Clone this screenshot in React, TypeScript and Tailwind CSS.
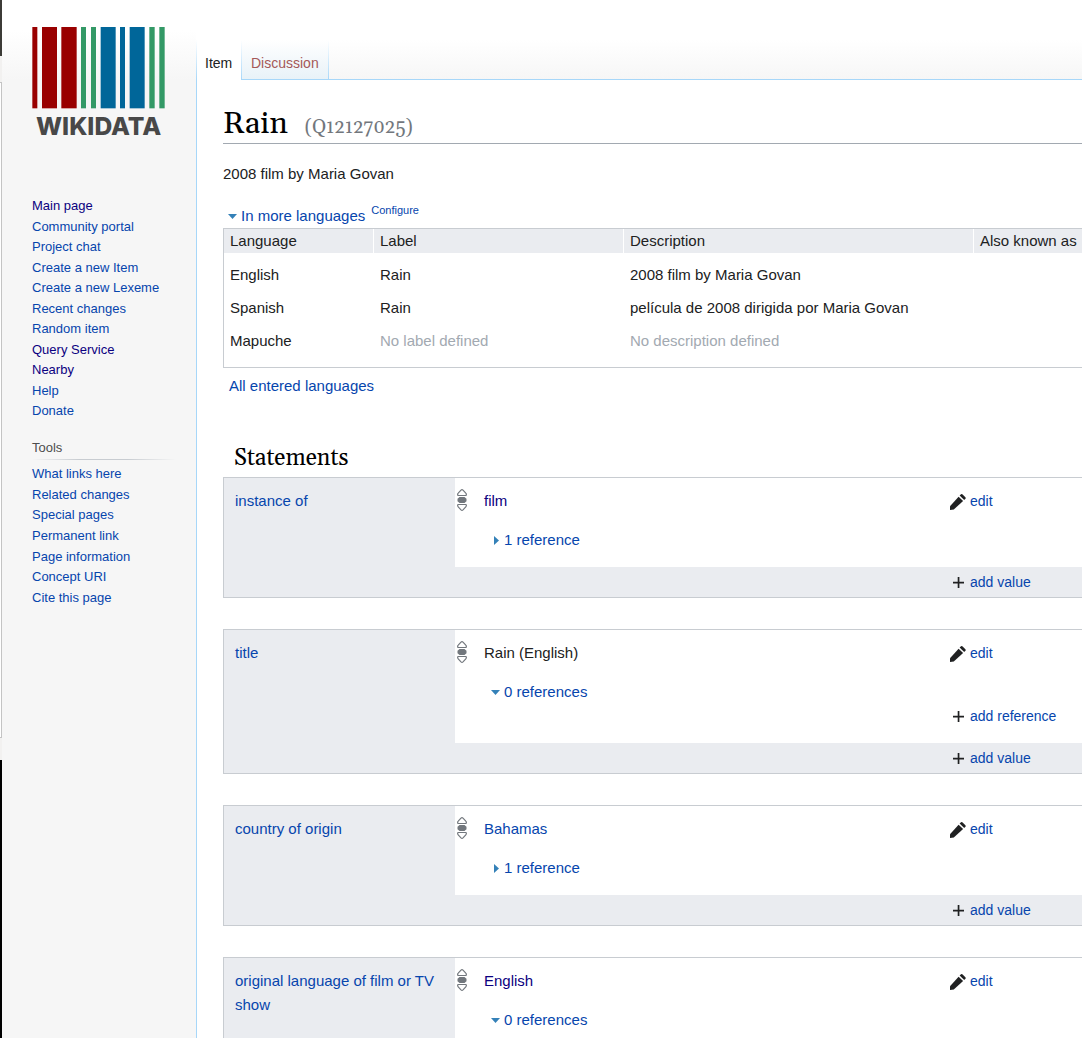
import React from "react";

const LINK = "text-[#0645ad] hover:underline";
const VISITED = "text-[#0b0080] hover:underline";

const BARS: [number, number, string][] = [
  [97, 15, "#990000"],
  [126, 45, "#990000"],
  [184, 46, "#990000"],
  [243, 15, "#339966"],
  [273, 15, "#339966"],
  [302, 45, "#006699"],
  [360, 15, "#006699"],
  [389, 45, "#006699"],
  [448, 16, "#339966"],
  [478, 16, "#339966"],
];

function Logo() {
  return (
    <a href="#main" aria-label="Wikidata" className="mt-[26px] ml-7 block w-[140px]">
      <svg viewBox="90 78 420 360" className="block h-[120px] w-[140px]">
        {BARS.map(([x, w, c]) => (
          <rect key={x} x={x} y={81} width={w} height={244} fill={c} />
        ))}
        <text
          x="296"
          y="404"
          textAnchor="middle"
          fontSize="74"
          fontWeight="800"
          fontFamily="Inter, sans-serif"
          fill="#484848"
        >
          WIKIDATA
        </text>
      </svg>
    </a>
  );
}

const MAIN_LINKS: [string, boolean][] = [
  ["Main page", true],
  ["Community portal", false],
  ["Project chat", false],
  ["Create a new Item", false],
  ["Create a new Lexeme", false],
  ["Recent changes", false],
  ["Random item", false],
  ["Query Service", true],
  ["Nearby", true],
  ["Help", false],
  ["Donate", false],
];

const TOOL_LINKS = [
  "What links here",
  "Related changes",
  "Special pages",
  "Permanent link",
  "Page information",
  "Concept URI",
  "Cite this page",
];

function Sidebar() {
  return (
    <div className="w-[194px] shrink-0 bg-[#f6f6f6] bg-[linear-gradient(to_bottom,#ffffff_30px,#f6f6f6_80px)] bg-[length:100%_80px] bg-no-repeat text-[13px] leading-5">
      <Logo />
      <nav aria-label="Navigation" className="mt-[50px] pl-[30px]">
        <ul className="flex h-[225px] flex-col justify-between">
          {MAIN_LINKS.map(([t, v]) => (
            <li key={t}>
              <a href="#nav" className={v ? VISITED : LINK}>{t}</a>
            </li>
          ))}
        </ul>
      </nav>
      <nav aria-labelledby="tools" className="mt-[17px] pl-[30px]">
        <h3 id="tools" className="text-[#4d4d4d]">Tools</h3>
        <div className="mt-px mr-5 h-px bg-[linear-gradient(to_right,rgba(200,204,209,0)_0%,#c8ccd1_33%,#c8ccd1_66%,rgba(200,204,209,0)_100%)]" />
        <ul className="mt-1 flex h-[144px] flex-col justify-between">
          {TOOL_LINKS.map((t) => (
            <li key={t}>
              <a href="#tool" className={LINK}>{t}</a>
            </li>
          ))}
        </ul>
      </nav>
    </div>
  );
}

function Down() {
  return (
    <svg viewBox="0 0 9 5" className="h-[5px] w-[9px] shrink-0" fill="#3481b8">
      <path d="M0 0h9L4.5 5z" />
    </svg>
  );
}

function Right() {
  return (
    <svg viewBox="0 0 5 9" className="h-[9px] w-[5px] shrink-0" fill="#3481b8">
      <path d="M0 0v9l5-4.5z" />
    </svg>
  );
}

function RankIcon() {
  return (
    <svg viewBox="0 0 10 22" className="mt-[11px] ml-[2px] h-[22px] w-[10px] shrink-0" aria-hidden="true">
      <path d="M1 6.5Q.2 5.2 1.2 4.2L4 1.2Q5 .2 6 1.2l2.8 3Q9.800 5.200 9 6.500z" fill="#fff" stroke="#72777d" strokeWidth="1.2" />
      <path d="M2.500 8h5L9.500 9.800v2.400L7.500 14h-5L.5 12.200V9.800z" fill="#72777d" />
      <path d="M1 15.500Q.2 16.800 1.200 17.800L4 20.800q1 1 2 0l2.800-3Q9.800 16.800 9 15.500z" fill="#fff" stroke="#72777d" strokeWidth="1.2" />
    </svg>
  );
}

function Pencil() {
  return (
    <svg viewBox="0 0 16 16" className="h-4 w-4" fill="#202122">
      <path d="M9.600 1.600 11 .3q.8-.6 1.600.1L15.400 3.200q.7.800 0 1.600L14.200 6z" />
      <path d="M0 12.200 8.600 2.700 13.100 7.100 3.800 15.600 0 16z" />
    </svg>
  );
}

function Plus() {
  return (
    <svg viewBox="0 0 11 11" className="mx-[3px] h-[11px] w-[11px]" fill="#202122">
      <path d="M4.700 0h1.700v4.700H11v1.700H6.400V11H4.700V6.400H0V4.700h4.700z" />
    </svg>
  );
}

function Action({ icon, label }: { icon: "edit" | "add"; label: string }) {
  return (
    <a href="#action" className={"flex w-[133px] shrink-0 items-center text-[14px] leading-6 " + LINK}>
      <span className="flex w-[21px] shrink-0 pt-px pl-px">{icon === "edit" ? <Pencil /> : <Plus />}</span>
      {label}
    </a>
  );
}

type S = { prop: string; value: string; kind: "visited" | "link" | "plain"; refs: number };

const STATEMENTS: S[] = [
  { prop: "instance of", value: "film", kind: "visited", refs: 1 },
  { prop: "title", value: "Rain (English)", kind: "plain", refs: 0 },
  { prop: "country of origin", value: "Bahamas", kind: "link", refs: 1 },
  { prop: "original language of film or TV show", value: "English", kind: "visited", refs: 0 },
];

function Statement({ prop, value, kind, refs }: S) {
  return (
    <section className="mb-[31px] flex border border-r-0 border-[#c8ccd1] bg-[#eaecf0]">
      <div className="w-[231px] shrink-0 px-[11px] py-[11px]">
        <a href="#prop" className={LINK}>{prop}</a>
      </div>
      <div className="min-w-0 flex-1">
        <div className="bg-white pb-[15px]">
          <div className="flex">
            <RankIcon />
            <div className="ml-[17px] min-w-0 flex-1 pt-[11px]">
              {kind === "plain" ? (
                <span>{value}</span>
              ) : (
                <a href="#value" className={kind === "visited" ? VISITED : LINK}>{value}</a>
              )}
            </div>
            <div className="pt-[11px]">
              <Action icon="edit" label="edit" />
            </div>
          </div>
          <button className={"mt-[15px] ml-9 flex items-center " + LINK}>
            <span className={refs ? "flex w-[13px] pl-[3px]" : "flex w-[13px]"}>{refs ? <Right /> : <Down />}</span>
            {refs} {refs === 1 ? "reference" : "references"}
          </button>
          {refs === 0 && (
            <div className="flex justify-end">
              <Action icon="add" label="add reference" />
            </div>
          )}
        </div>
        <div className="flex justify-end py-[3px]">
          <Action icon="add" label="add value" />
        </div>
      </div>
    </section>
  );
}

const ROWS = [
  ["English", "Rain", "2008 film by Maria Govan"],
  ["Spanish", "Rain", "película de 2008 dirigida por Maria Govan"],
  ["Mapuche", "", ""],
];

export default function App() {
  return (
    <div className="flex h-screen overflow-hidden bg-white font-['Liberation_Sans',Arial,sans-serif] text-[15px] leading-6 text-[#202122]">
      <div className="flex w-[2px] shrink-0 flex-col" aria-hidden="true">
        <div className="h-14 bg-[#3c3b37]" />
        <div className="h-[26px] bg-[#f2f1f0]" />
        <div className="h-[656px] border-y border-r border-[#c4c4c4] bg-white" />
        <div className="h-[22px] bg-[#f2f1f0]" />
        <div className="flex-1 bg-black" />
      </div>
      <Sidebar />
      <div className="flex min-w-0 flex-1 flex-col">
        <nav aria-label="Views" className="flex h-20 shrink-0 items-end bg-[linear-gradient(to_bottom,#ffffff_50%,#f6f6f6_100%)]">
          <div className="h-10 w-px bg-[linear-gradient(to_bottom,#ffffff,#a7d7f9)]" />
          <a href="#item" className="h-10 w-11 bg-white pt-[11px] pl-2 text-[14px]">
            Item
          </a>
          <div className="h-10 w-px bg-[linear-gradient(to_bottom,#ffffff,#a7d7f9)]" />
          <a
            href="#talk"
            className="h-10 border-b border-[#a7d7f9] bg-[linear-gradient(to_bottom,#ffffff,#e8f2f8)] px-[9px] pt-[11px] text-[14px] text-[#a55858]"
          >
            Discussion
          </a>
          <div className="h-10 w-px bg-[linear-gradient(to_bottom,#ffffff,#a7d7f9)]" />
          <div className="h-10 flex-1 border-b border-[#a7d7f9]" />
        </nav>
        <main className="flex-1 border-l border-[#a7d7f9] pl-[26px]">
          <h1 className="flex h-16 items-baseline border-b border-[#a2a9b1] pt-6 font-[Georgia,Gelasio,'Liberation_Serif',serif] text-[31px] leading-10 text-black">
            Rain
            <span className="ml-[17px] text-[19px] text-[#72777d]">(Q12127025)</span>
          </h1>
          <p className="mt-[18px]">2008 film by Maria Govan</p>
          <div className="mt-[18px] flex items-center pl-[5px]">
            <button className={"flex items-center " + LINK}>
              <span className="flex w-[13px]"><Down /></span>
              In more languages
            </button>
            <a href="#configure" className={"mb-3 ml-[6px] text-[11px] leading-none " + LINK}>Configure</a>
          </div>
          <div className="border border-r-0 border-[#c8ccd1] pb-[10px]">
            <table className="w-full table-fixed border-separate border-spacing-0 text-left">
              <colgroup>
                <col className="w-[150px]" />
                <col className="w-[250px]" />
                <col className="w-[350px]" />
                <col />
              </colgroup>
              <thead>
                <tr className="bg-[#eaecf0]">
                  {["Language", "Label", "Description", "Also known as"].map((h) => (
                    <th key={h} className="border-r border-white pl-[6px] font-normal whitespace-nowrap last:border-r-0">
                      {h}
                    </th>
                  ))}
                </tr>
              </thead>
              <tbody>
                <tr aria-hidden="true"><td colSpan={4} className="h-[5px]" /></tr>
                {ROWS.map(([lang, label, desc]) => (
                  <tr key={lang} className="h-[33px]">
                    <td className="pl-[6px]">{lang}</td>
                    <td className={label ? "pl-[6px]" : "pl-[6px] text-[#a2a9b1]"}>{label || "No label defined"}</td>
                    <td className={desc ? "pl-[6px]" : "pl-[6px] text-[#a2a9b1]"}>{desc || "No description defined"}</td>
                    <td />
                  </tr>
                ))}
              </tbody>
            </table>
          </div>
          <a href="#all" className={"mt-[6px] ml-[6px] inline-block " + LINK}>All entered languages</a>
          <h2 className="mt-[45px] mb-[2px] pl-[11px] font-[Georgia,Gelasio,'Liberation_Serif',serif] text-[23px] leading-8 text-black">
            Statements
          </h2>
          {STATEMENTS.map((s) => (
            <Statement key={s.prop} {...s} />
          ))}
        </main>
      </div>
    </div>
  );
}
